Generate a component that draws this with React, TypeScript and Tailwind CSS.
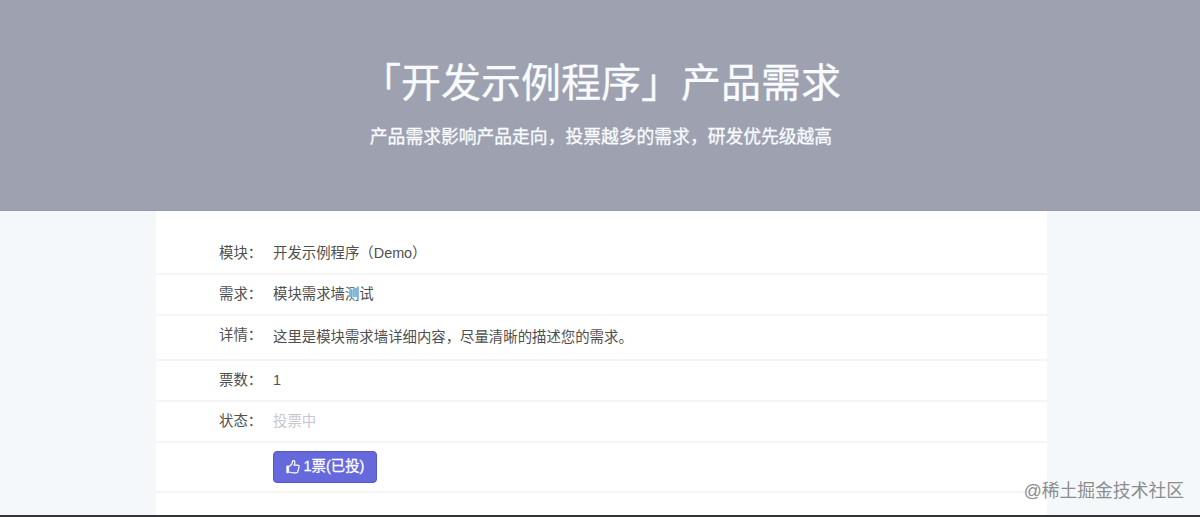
import { ReactNode } from "react";

interface RowProps {
  label?: string;
  className: string;
  children: ReactNode;
}

function Row({ label, className, children }: RowProps) {
  return (
    <div className={`flex border-b-2 border-[#f5f5f5] pl-[63px] ${className}`}>
      <span className="w-[54px] shrink-0 leading-[22px]">{label}</span>
      {children}
    </div>
  );
}

function ThumbIcon() {
  return (
    <svg viewBox="0 0 14 14" fill="none" className="size-[14px]">
      <path d="M.7 5.9h2.1v7H.7z" fill="currentColor" stroke="currentColor" strokeWidth=".6" />
      <path
        d="M3.4 6.5 5.7 4.3 6.4 1.6C6.5 1 7 .7 7.5.7c.9 0 1.4.7 1.4 1.6 0 1-.4 1.9-.8 2.8h3.6c.9 0 1.5.7 1.5 1.5 0 .6-.3 1-.6 1.3.1.6.1 1.1-.3 1.6.1.6 0 1.1-.4 1.5.1 1.2-.7 1.9-1.9 1.9H7.3c-1.5 0-2.5-.7-3.9-.8"
        stroke="currentColor"
        strokeWidth="1.2"
        strokeLinejoin="round"
      />
    </svg>
  );
}

export default function App() {
  return (
    <div className="relative flex h-[517px] flex-col overflow-hidden border-b-2 border-[#333437] bg-[#f4f8fb] font-['Liberation_Sans','Noto_Sans_CJK_SC',sans-serif] text-[14.4px] text-[#505050]">
      <header className="flex h-[211px] shrink-0 flex-col items-center border-b border-[#9699a9] bg-[#9ea2b0] pt-[53px] pl-[2px] text-[#f8fbff]">
        <h1 className="text-[40px] leading-[60px] [-webkit-text-stroke:0.3px]">
          「开发示例程序」产品需求
        </h1>
        <p className="mt-[11px] text-[17.8px] leading-[26px] [-webkit-text-stroke:0.3px]">
          产品需求影响产品走向，投票越多的需求，研发优先级越高
        </p>
      </header>

      <main className="ml-[156px] w-[891px] flex-1 bg-white pt-[21px]">
        <Row label="模块：" className="h-[43px] pt-[10px]">
          <span className="leading-[22px]">开发示例程序（Demo）</span>
        </Row>
        <Row label="需求：" className="h-[41px] pt-[8px]">
          <span className="leading-[22px]">模块需求墙测试</span>
        </Row>
        <Row label="详情：" className="h-[45px] pt-[8px]">
          <span className="pt-[2px] leading-[22px]">
            这里是模块需求墙详细内容，尽量清晰的描述您的需求。
          </span>
        </Row>
        <Row label="票数：" className="h-[41px] pt-[8px]">
          <span className="leading-[22px]">1</span>
        </Row>
        <Row label="状态：" className="h-[41px] pt-[8px]">
          <span className="leading-[22px] text-[#c5c8ce]">投票中</span>
        </Row>
        <Row className="h-[50px] pt-[8px]">
          <button
            type="button"
            className="flex h-[32px] w-[104px] items-center justify-center gap-1 rounded-[4px] border border-[#5558c8] bg-[#6569dc] text-white [-webkit-text-stroke:0.3px]"
          >
            <ThumbIcon />
            <span>1票(已投)</span>
          </button>
        </Row>
      </main>

      <span className="absolute right-[16px] bottom-[11px] text-[17.8px] leading-[26px] text-[#8b8d8f]">
        @稀土掘金技术社区
      </span>
    </div>
  );
}
